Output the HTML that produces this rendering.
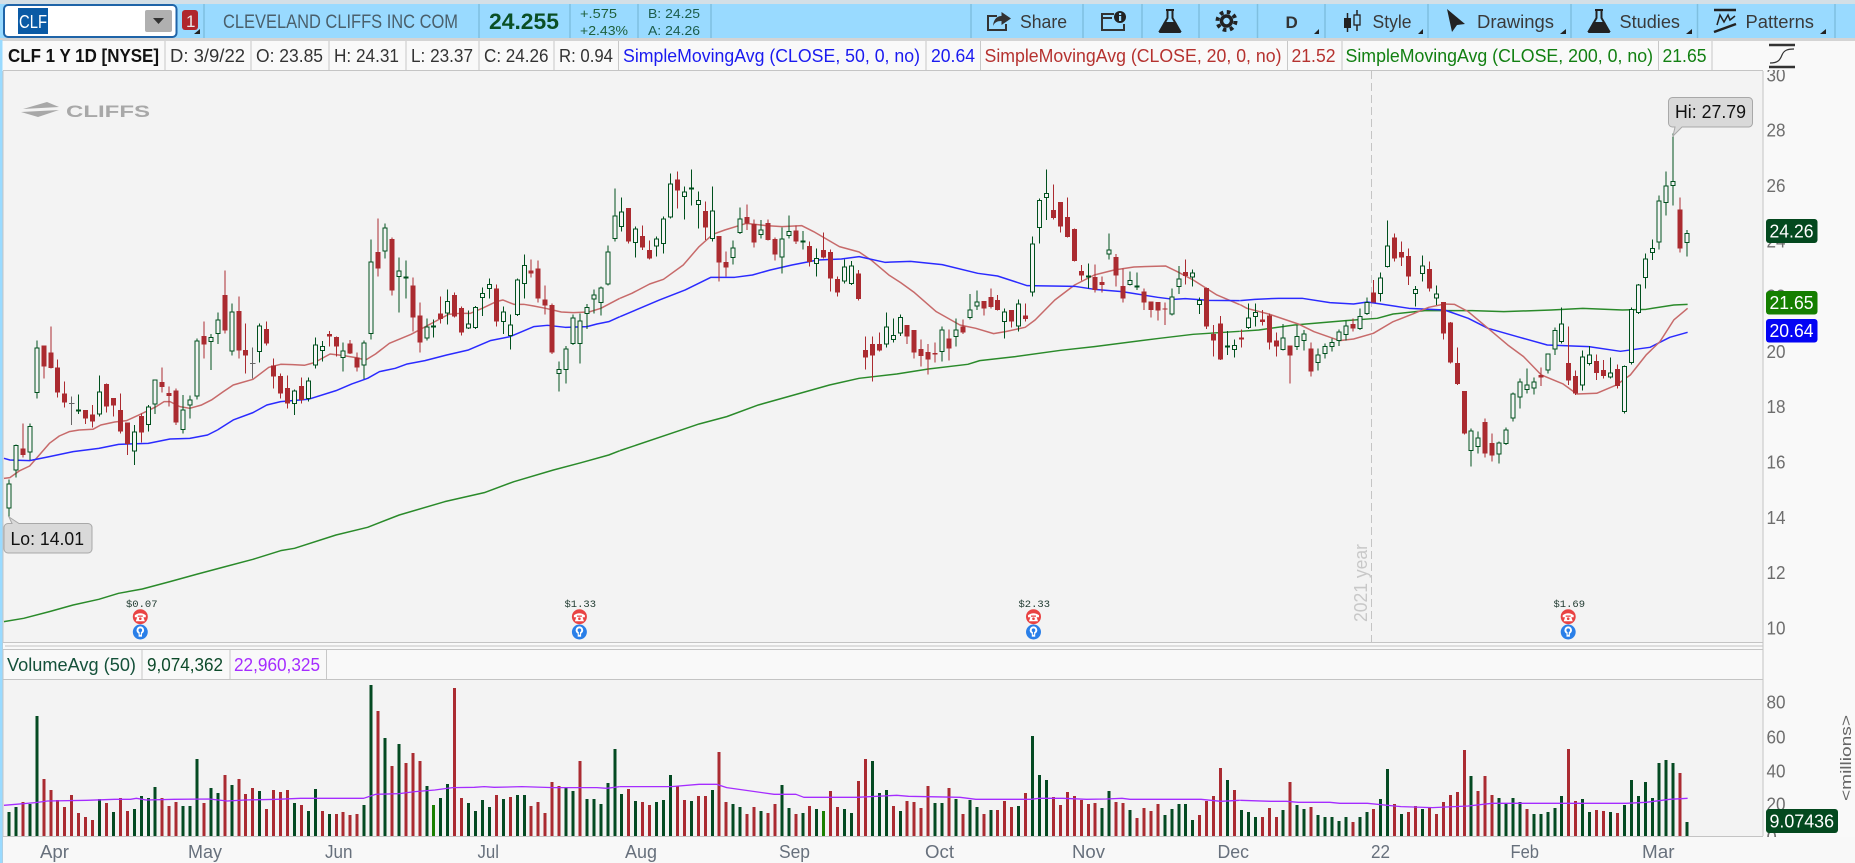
<!DOCTYPE html>
<html><head><meta charset="utf-8"><title>CLF chart</title>
<style>
html,body{margin:0;padding:0;width:1855px;height:863px;overflow:hidden;background:#f9f9f9}
svg{display:block;position:absolute;left:0;top:0}
text{font-family:"Liberation Sans",sans-serif;white-space:pre}
path,polyline{vector-effect:non-scaling-stroke;fill:none}
.s{stroke:#7fbfe0;stroke-width:1.5}
.t{font-size:18px;fill:#3a3a3a}
.l{font-size:18px}
.a{font-size:18.5px;fill:#6e6e6e}
.x{font-size:18.5px;fill:#67707c}
.w{font-size:18.5px;fill:#fff}
.m{font-size:10.5px;fill:#1f3a30;font-family:"Liberation Mono",monospace}
</style></head><body>
<svg width="1855" height="863" viewBox="0 0 1855 863" xmlns="http://www.w3.org/2000/svg">
<rect width="1855" height="863" fill="#f9f9f9"/>
<rect width="1855" height="4" fill="#d3dfe6"/>
<rect y="4" width="1855" height="34" fill="#99daff"/>
<rect y="38" width="1855" height="3" fill="#d4d4d4"/>
<rect y="40" width="2.5" height="823" fill="#99daff"/>
<rect x="3" y="71" width="1760" height="571" fill="#f3f3f3"/>
<rect x="3" y="680" width="1760" height="156" fill="#f3f3f3"/>
<!-- toolbar -->
<rect x="4" y="5" width="172.500" height="32" rx="4" fill="#fff" stroke="#1f64a8" stroke-width="2"/>
<rect x="18" y="8" width="30" height="26" fill="#0a5aa5"/>
<text x="19" y="28" font-size="18" fill="#fff" textLength="28" lengthAdjust="spacingAndGlyphs">CLF</text>
<rect x="145" y="10" width="27" height="22" rx="2" fill="#b0b0b0"/>
<polygon points="153,18 164,18 158.500,24" fill="#333"/>
<rect x="182" y="10" width="16" height="20" rx="3" fill="#b0272d"/>
<text x="186" y="27" font-size="17" fill="#e8e8e8">1</text>
<polygon points="200,29 200,34 194,34" fill="#222"/>
<path class="s" d="M204 4V38M479 4V38M570 4V38M638 4V38M711 4V38M971 4V38M1083 4V38M1142 4V38M1199 4V38M1257.500 4V38M1325 4V38M1428 4V38M1571 4V38M1697.500 4V38M1835 4V38"/>
<text x="223" y="28" font-size="19" fill="#4a5f6b" textLength="235" lengthAdjust="spacingAndGlyphs">CLEVELAND CLIFFS INC COM</text>
<text x="489" y="29" font-size="22" font-weight="bold" fill="#0a4f25" textLength="70" lengthAdjust="spacingAndGlyphs">24.255</text>
<text x="580" y="18" font-size="13" fill="#1e5f3a" textLength="37" lengthAdjust="spacingAndGlyphs">+.575</text>
<text x="580" y="35" font-size="13" fill="#1e5f3a" textLength="48" lengthAdjust="spacingAndGlyphs">+2.43%</text>
<text x="648" y="18" font-size="13" fill="#1b5c4b" textLength="52" lengthAdjust="spacingAndGlyphs">B: 24.25</text>
<text x="648" y="35" font-size="13" fill="#1b5c4b" textLength="52" lengthAdjust="spacingAndGlyphs">A: 24.26</text>
<!-- share -->
<path d="M997 16H988V30H1006V24" stroke="#333" stroke-width="2"/>
<path style="fill:#333" d="M1001.500 12L1011 18.500L1001.500 25V21C997 21 994.500 22.500 993 26C993.500 20 996.500 16 1001.500 16Z"/>
<text class="t" x="1020" y="28" textLength="47" lengthAdjust="spacingAndGlyphs">Share</text>
<!-- info -->
<path d="M1114 14H1102V30H1124V24M1102 18H1112" stroke="#333" stroke-width="2"/>
<circle cx="1120" cy="17" r="6" fill="#222"/>
<rect x="1119" y="16" width="2.200" height="5" fill="#99daff"/><rect x="1119" y="13" width="2.200" height="2" fill="#99daff"/>
<!-- flask -->
<path d="M1166 10H1174M1167.500 10V18L1160 31H1180L1172.500 18V10" stroke="#222" stroke-width="2"/>
<path style="fill:#222" d="M1164 22H1176L1181 33H1159Z"/>
<!-- gear -->
<circle cx="1226.500" cy="21" r="5" fill="none" stroke="#222" stroke-width="3.500"/>
<circle cx="1226.500" cy="21" r="9" fill="none" stroke="#222" stroke-width="4" stroke-dasharray="3.600 3.470"/>
<text x="1285.500" y="28" font-size="17" font-weight="bold" fill="#333">D</text>
<polygon points="1319,29 1319,34 1314,34" fill="#222"/>
<!-- style icon -->
<path d="M1347.500 13V32" stroke="#222" stroke-width="1.500"/><rect x="1344" y="18" width="7" height="10" fill="#222"/>
<path d="M1357 10V31" stroke="#222" stroke-width="1.500"/><rect x="1354" y="15" width="6" height="10" fill="#99daff" stroke="#222" stroke-width="1.300"/>
<text class="t" x="1372.500" y="28" textLength="39" lengthAdjust="spacingAndGlyphs">Style</text>
<polygon points="1423,29 1423,34 1418,34" fill="#222"/>
<!-- cursor -->
<polygon points="1447,9 1465,24 1457,25 1452,32" fill="#222"/>
<text class="t" x="1477" y="28" textLength="77" lengthAdjust="spacingAndGlyphs">Drawings</text>
<polygon points="1566,29 1566,34 1560,34" fill="#222"/>
<path d="M1595 10H1603M1596.500 10V18L1589 31H1609L1601.500 18V10" stroke="#222" stroke-width="2"/>
<path style="fill:#222" d="M1593 22H1605L1610 33H1588Z"/>
<text class="t" x="1619.500" y="28" textLength="60.500" lengthAdjust="spacingAndGlyphs">Studies</text>
<polygon points="1692,29 1692,34 1686,34" fill="#222"/>
<!-- patterns -->
<path d="M1714 10H1736" stroke="#222" stroke-width="2.500"/>
<path d="M1714 32L1736 24" stroke="#222" stroke-width="2.500"/>
<path d="M1717 25L1720 15L1724 22L1728 15L1730 20L1735 16" stroke="#222" stroke-width="1.500"/>
<text class="t" x="1745.500" y="28" textLength="68.500" lengthAdjust="spacingAndGlyphs">Patterns</text>
<polygon points="1826,29 1826,34 1820,34" fill="#222"/>
<!-- axes labels -->
<text class="a" x="1766.500" y="81.500" textLength="19" lengthAdjust="spacingAndGlyphs">30</text>
<text class="a" x="1766.500" y="136.500" textLength="19" lengthAdjust="spacingAndGlyphs">28</text>
<text class="a" x="1766.500" y="192" textLength="19" lengthAdjust="spacingAndGlyphs">26</text>
<text class="a" x="1766.500" y="247.500" textLength="19" lengthAdjust="spacingAndGlyphs">24</text>
<text class="a" x="1766.500" y="302.500" textLength="19" lengthAdjust="spacingAndGlyphs">22</text>
<text class="a" x="1766.500" y="358" textLength="19" lengthAdjust="spacingAndGlyphs">20</text>
<text class="a" x="1766.500" y="413" textLength="19" lengthAdjust="spacingAndGlyphs">18</text>
<text class="a" x="1766.500" y="468.500" textLength="19" lengthAdjust="spacingAndGlyphs">16</text>
<text class="a" x="1766.500" y="524" textLength="19" lengthAdjust="spacingAndGlyphs">14</text>
<text class="a" x="1766.500" y="579" textLength="19" lengthAdjust="spacingAndGlyphs">12</text>
<text class="a" x="1766.500" y="634.500" textLength="19" lengthAdjust="spacingAndGlyphs">10</text>
<text class="a" x="1766.500" y="708.500" textLength="19" lengthAdjust="spacingAndGlyphs">80</text>
<text class="a" x="1766.500" y="743.500" textLength="19" lengthAdjust="spacingAndGlyphs">60</text>
<text class="a" x="1766.500" y="777.500" textLength="19" lengthAdjust="spacingAndGlyphs">40</text>
<text class="a" x="1766.500" y="810.500" textLength="19" lengthAdjust="spacingAndGlyphs">20</text>
<text class="a" x="1766.500" y="844">0</text>
<!-- legend row -->
<rect x="3" y="41" width="1852" height="29" fill="#f9f9f9"/>
<path d="M3 70.500H1763M3 71V863" stroke="#c4c4c4" stroke-width="1"/>
<path d="M165 41V70M251 41V70M329 41V70M406 41V70M479 41V70M554 41V70M618.500 41V70M926 41V70M980.500 41V70M1287.500 41V70M1342 41V70M1658.500 41V70M1712 41V70" stroke="#c8c8c8" stroke-width="1"/>
<text class="l" x="8" y="62" font-weight="bold" fill="#111" textLength="151" lengthAdjust="spacingAndGlyphs">CLF 1 Y 1D [NYSE]</text>
<text class="l" x="170" y="62" fill="#333" textLength="75" lengthAdjust="spacingAndGlyphs">D: 3/9/22</text>
<text class="l" x="256" y="62" fill="#333" textLength="67" lengthAdjust="spacingAndGlyphs">O: 23.85</text>
<text class="l" x="334" y="62" fill="#333" textLength="65" lengthAdjust="spacingAndGlyphs">H: 24.31</text>
<text class="l" x="411" y="62" fill="#333" textLength="62" lengthAdjust="spacingAndGlyphs">L: 23.37</text>
<text class="l" x="484" y="62" fill="#333" textLength="64.500" lengthAdjust="spacingAndGlyphs">C: 24.26</text>
<text class="l" x="559" y="62" fill="#333" textLength="54" lengthAdjust="spacingAndGlyphs">R: 0.94</text>
<text class="l" x="623" y="62" fill="#1a1af0" textLength="297" lengthAdjust="spacingAndGlyphs">SimpleMovingAvg (CLOSE, 50, 0, no)</text>
<text class="l" x="931" y="62" fill="#1a1af0" textLength="44" lengthAdjust="spacingAndGlyphs">20.64</text>
<text class="l" x="984.500" y="62" fill="#b5322f" textLength="297" lengthAdjust="spacingAndGlyphs">SimpleMovingAvg (CLOSE, 20, 0, no)</text>
<text class="l" x="1291.500" y="62" fill="#b5322f" textLength="44" lengthAdjust="spacingAndGlyphs">21.52</text>
<text class="l" x="1345.500" y="62" fill="#128012" textLength="307.500" lengthAdjust="spacingAndGlyphs">SimpleMovingAvg (CLOSE, 200, 0, no)</text>
<text class="l" x="1662.500" y="62" fill="#128012" textLength="44" lengthAdjust="spacingAndGlyphs">21.65</text>
<!-- S icon -->
<path d="M1769 45H1795M1769 67H1795" stroke="#333" stroke-width="2.500"/>
<path d="M1770 63C1778 63 1780 60 1782 55C1784 50 1788 49 1794 49" stroke="#333" stroke-width="1.200"/>
<!-- logo -->
<polygon points="23,109 47,102 59,107 41,108" fill="#a8a8a8"/>
<polygon points="21,112 59,110 38,117" fill="#a8a8a8"/>
<text x="66" y="117" font-size="16.500" font-weight="bold" fill="#a8a8a8" textLength="84" lengthAdjust="spacingAndGlyphs">CLIFFS</text>
<!-- year line -->
<path d="M1371.500 71V642" stroke="#c4c4c4" stroke-width="1" stroke-dasharray="8 4"/>
<text transform="translate(1367,622) rotate(-90)" font-size="18" fill="#c8c8c8" textLength="78" lengthAdjust="spacingAndGlyphs">2021 year</text>
<!-- MAs -->
<g stroke-linejoin="round">
<g transform="translate(0,430) scale(.3953,.3333)" stroke-width="1.500">
<polyline stroke="#c76a6a" points="10,145 25,143 50,122 75,108 92,85 125,40 150,18 175,5 200,0"/>
<polyline stroke="#2a2aff" points="10,85 25,90 75,92 125,80 185,65 250,55 300,43 375,40 430,27 480,25 525,15 550,0"/>
<polyline stroke="#2a8a2a" points="10,575 60,565 125,545 185,525 250,508 300,490 360,477 430,455 500,432 570,410 640,388 710,362 745,355 850,315 930,292 1010,255 1125,215 1225,188 1300,155 1400,120 1470,98 1540,75 1568,62"/>
</g>
<g transform="translate(0,130) scale(.3953,.3333)" stroke-width="1.500">
<polyline stroke="#c76a6a" points="200,900 235,898 255,885 290,876 320,872 355,853 395,830 415,815 430,815 455,830 480,835 510,825 535,810 565,785 590,765 640,748 680,712 710,703 740,704 770,706 795,698 835,672 870,677 900,683 925,690 950,672 985,640 1040,613 1100,575 1135,553 1165,550 1190,550 1220,535 1255,515 1272,510 1300,523 1325,523 1350,528 1380,535 1420,546 1450,548 1490,546 1520,535 1568,505"/>
<polyline stroke="#2a2aff" points="550,900 590,870 640,848 675,825 710,815 780,808 850,782 890,762 930,745 960,725 1000,715 1030,702 1075,692 1130,675 1185,660 1240,632 1290,620 1320,605 1350,590 1385,586 1430,592 1485,590 1510,582 1540,575 1568,560"/>
</g>
<g transform="translate(620,130) scale(.3953,.3333)" stroke-width="1.500">
<polyline stroke="#c76a6a" points="0,505 30,490 75,462 110,448 160,405 200,350 235,313 265,300 320,280 370,287 410,290 460,287 490,305 555,350 605,366 635,390 680,435 710,458 745,488 800,545 860,585 900,595 945,611 975,605 1025,592 1050,570 1100,510 1150,465 1200,435 1250,420 1300,411 1345,409 1380,408 1410,425 1450,450 1510,495 1568,524"/>
<polyline stroke="#2a2aff" points="0,560 50,535 100,510 165,480 230,442 290,442 335,435 380,420 435,405 500,390 560,387 605,380 670,397 735,394 815,404 905,430 955,438 1030,467 1150,469 1200,478 1270,485 1360,502 1400,508 1430,506 1490,511 1568,512"/>
<polyline stroke="#2a8a2a" points="0,962 160,898 200,882 270,860 350,825 440,795 530,765 605,745 700,732 780,717 880,703 910,692 1000,680 1115,661 1200,650 1365,625 1450,613 1568,604"/>
</g>
<g transform="translate(1235,130) scale(.3953,.3333)" stroke-width="1.500">
<polyline stroke="#2a8a2a" points="13,604 60,600 150,585 280,572 360,565 400,552 480,542 600,542 680,545 800,540 880,535 980,540 1040,538 1110,525 1145,523"/>
<polyline stroke="#2a2aff" points="13,512 50,508 110,505 170,505 240,518 300,522 335,516 440,535 530,540 590,565 640,595 720,622 790,645 895,650 975,664 1050,652 1100,622 1145,607"/>
<polyline stroke="#c76a6a" points="13,524 30,535 85,552 160,582 200,605 265,632 300,627 350,610 400,575 450,552 490,532 530,522 555,523 590,545 630,585 690,645 730,680 775,735 830,762 865,792 915,790 965,765 1000,735 1040,675 1075,635 1110,570 1145,535"/>
</g>
</g>
<!-- candles -->
<defs>
<path id="gb" d="M0 1068V1128M1 953V1014M3 896V960M4 660V782M13 792V846M18 912V957M20 837V877M21 756V816M25 846V892M26 816V819M27 639V792M29 628v.1M30 576V605M32 552V657M36 594V659M41 789V815M43 759V800M44 651V699M45 655v.1M48 669V677M51 645V699M52 402V605M54 300V357M56 429V434M60 597V618M63 520V543M66 588v.1M67 538V587M68 496v.1M69 469v.1M71 552V569M72 591V610M73 456V548M74 412V455M79 724v.1M80 663V713M81 570V635M82 579V635M83 538V545M84 501v.1M85 480V512M86 372V456M87 264V320M88 252V284M90 303V332M93 333V342M94 273V335M95 168V255M97 192V194M99 218v.1M101 249V320M104 360V377M105 273V302M108 306V308M111 333V375M112 310v.1M116 391V395M120 417V447M121 414V455M126 597V636M127 622v.1M128 569V603M134 606V659M136 606V614M138 546V557M139 522v.1M143 552V569M145 528V582M147 348V480M148 218V287M149 196v.1M158 366v.1M161 457v.1M167 507V546M168 453V464M170 435v.1M171 517V518M176 652v.1M178 570V587M179 553v.1M183 630V652M185 625V644M186 618V625M188 681V691M189 655V665M190 644v.1M191 612V625M192 594V608M194 565V590M195 523V545M197 450V485M198 354V404M202 485v.1M203 414V425M205 498v.1M210 909V956M211 930V944M214 945V966M215 906V935M216 798V858M217 762V795M218 771V773M219 762V768M221 678V714M222 608V651M223 588V628M226 687V759M227 681V695M230 735v.1M232 716V838M233 544V692M234 471V542M235 393V437M236 361v.1M237 219V330M238 174V212M239 160v.1M241 316V332"/>
</defs>
<g transform="translate(9,130) scale(6.963,.33333)" shape-rendering="crispEdges">
<path stroke="#666" stroke-width="1" d="M9 800V885M8.600 820H9.400M35 653V745M34.600 700H35.400"/>
<path stroke="#ab2b30" stroke-width="1" d="M2 880V982M5 646V745M6 590V716M7 688V802M8 755V832M11 840V882M12 825V892M14 760V848M15 804V860M16 790V910M17 877V975M19 850V938M22 712V788M23 770V830M24 775V885M28 575V685M31 421V610M33 500V685M34 580V730M37 575V646M38 686V775M39 731V805M40 737V835M42 743V820M46 603V650M47 620V680M49 630V672M50 667V725M53 265V440M55 322V497M58 443V605M59 518V668M62 500V580M64 487V562M65 530V617M70 463V590M75 388V442M76 392V518M77 466V553M78 520V672M89 234V340M91 286V360M92 332V388M96 125V235M100 215V330M102 318V455M103 365V440M106 223V300M107 268V352M109 268V332M110 322V392M113 287V342M115 334V410M117 307V385M118 358V485M119 440V500M122 420V512M123 620V718M124 620V755M125 607V664M129 585V642M130 600V685M131 628V710M132 642V733M133 637V697M135 598V692M137 568V612M140 513V556M141 476V535M142 495V542M144 540V592M146 520V575M150 163V268M151 216V308M152 202V322M153 295V395M154 405V452M156 403V487M157 440V488M159 372V470M160 415V518M163 475V540M164 514V562M165 516V572M166 518V585M169 388V464M172 472V597M173 585V680M174 558V690M177 598V652M180 540V587M181 550V658M182 608V680M184 646V760M187 638V740M193 566V604M196 450V517M199 310V395M200 335V408M201 355V465M204 394V485M206 516V628M207 576V700M208 652V765M209 783V913M212 866V983M213 910V995M220 712V768M224 590V765M225 722V795M228 673V750M229 690V745M231 703V775M240 203V368"/>
<path stroke="#ab2b30" stroke-width="5" d="M2 955V975M5 646V710M6 667V714M7 712V788M8 790V818M11 840V866M12 853V875M14 762V830M15 804V827M16 840V905M17 877V942M19 858V908M22 756V771M23 789V798M24 781V878M28 618V644M31 495V602M33 543V662M34 660V677M37 597V641M38 706V740M39 738V791M40 774V821M42 768V810M46 612V620M47 621V650M49 640V671M50 682V713M53 366V416M55 327V482M58 466V563M59 556V638M62 550V567M64 495V560M65 534V608M70 475V575M75 421V431M76 415V506M77 508V527M78 525V668M89 234V335M91 318V353M92 360V386M96 148V182M100 243V293M102 318V398M103 396V413M106 261V280M107 282V338M109 279V330M110 327V374M113 301V335M115 348V396M117 360V383M118 366V446M119 447V488M122 430V507M123 660V683M124 642V677M125 642V662M129 585V620M130 600V668M131 657V678M132 666V689M133 669V674M135 625V656M137 590V608M140 513V536M141 501V531M142 510V540M144 540V575M146 556V567M150 240V264M151 216V290M152 261V321M153 297V393M154 423V437M156 441V480M157 456V465M159 381V437M160 468V506M163 484V518M164 514V540M165 516V542M166 535V539M169 426V438M172 474V590M173 612V632M174 580V689M177 622V629M180 568V576M181 557V638M182 631V650M184 646V677M187 655V725M193 582V596M196 487V517M199 322V386M200 366V383M201 378V440M204 417V476M206 516V611M207 578V698M208 699V762M209 783V911M212 876V971M213 939V977M220 735V743M224 699V752M225 738V790M228 693V729M229 720V738M231 717V768M240 238V356"/>
<path stroke="#00501e" stroke-width="1" d="M0 1048V1160M1 943V1042M3 880V990M4 632V805M10 793V852M13 737V860M18 885V1005M20 825V905M21 748V852M25 795V910M26 797V865M27 626V808M29 612V720M30 548V642M32 521V676M36 580V697M41 778V855M43 742V815M44 622V715M45 633V695M48 638V725M51 632V747M52 328V628M54 281V385M56 382V548M57 392V505M60 565V632M61 568V622M63 478V583M66 542V597M67 528V597M68 473V558M69 446V505M71 530V612M72 553V658M73 445V558M74 373V505M79 695V785M80 648V760M81 553V645M82 550V700M83 522V597M84 478V550M85 470V556M86 347V466M87 176V334M88 202V305M90 290V382M93 320V380M94 259V370M95 130V265M97 170V268M98 118V226M99 185V295M101 170V335M104 332V404M105 232V312M108 270V325M111 292V430M112 256V325M114 303V358M116 356V440M120 388V460M121 393V465M126 548V652M127 566V638M128 553V618M134 590V695M136 565V650M138 492V568M139 481V540M143 535V625M145 508V605M147 320V500M148 205V340M149 118V270M155 400V475M158 310V388M161 425V467M162 428V480M167 476V556M168 408V492M170 418V470M171 502V552M175 603V675M176 628V683M178 520V597M179 520V590M183 582V662M185 585V660M186 600V662M188 655V722M189 640V685M190 625V665M191 598V648M192 572V632M194 535V600M195 502V555M197 428V515M198 271V413M202 468V530M203 376V455M205 466V525M210 895V1010M211 905V970M214 935V1000M215 892V945M216 788V875M217 745V835M218 716V790M219 743V794M221 670V730M222 593V675M223 533V640M226 662V782M227 648V706M230 682V745M232 706V850M233 533V703M234 462V552M235 370V476M236 328V390M237 196V358M238 125V256M239 10V226M241 300V380"/>
<path stroke="#00501e" stroke-width="5" d="M10 839V845M57 439V445M61 587V593M98 173V179M114 331V337M155 437V443M162 467V473M175 647V653"/>
<use href="#gb" stroke="#00501e" stroke-width="5" stroke-linecap="square"/>
<use href="#gb" stroke="#f5f5f5" stroke-width="3" stroke-linecap="square"/>
</g>
<!-- earnings -->
<text class="m" x="126" y="607">$0.07</text>
<text class="m" x="564.500" y="607">$1.33</text>
<text class="m" x="1018.500" y="607">$2.33</text>
<text class="m" x="1553.500" y="607">$1.69</text>
<defs>
<g id="ev">
<circle cx="0" cy="0" r="7.500" fill="#e94343"/>
<path style="fill:#fff" d="M-5.500 -1.500Q0 -5.500 5.500 -1.500V.5H2.500V-1.200H-2.500V.5H-5.500Z"/>
<path style="fill:#fff" d="M-3 0H3L4.500 4.500H-4.500Z"/>
<circle cx="0" cy="2" r="1.300" fill="#e94343"/>
<circle cx="0" cy="15.300" r="7.500" fill="#2a7fe8"/>
<circle cx="0" cy="13.500" r="3.800" fill="#fff"/>
<rect x="-1.700" y="16" width="3.400" height="4" fill="#fff"/>
<circle cx="0" cy="13.500" r="1.800" fill="#2a7fe8"/>
<rect x="-.6" y="14" width="1.200" height="4" fill="#2a7fe8"/>
</g>
</defs>
<use href="#ev" x="140.300" y="616.700"/>
<use href="#ev" x="579.400" y="616.700"/>
<use href="#ev" x="1033.500" y="616.700"/>
<use href="#ev" x="1568.200" y="616.700"/>
<!-- Hi / Lo -->
<path style="fill:#d9d9d9" stroke="#a8a8a8" d="M1672.500 97.500H1749A4 4 0 0 1 1752.500 101.500V123A4 4 0 0 1 1749 127H1682L1673 136L1675 127H1672.500A4 4 0 0 1 1668.500 123V101.500A4 4 0 0 1 1672.500 97.500Z"/>
<text x="1675" y="118" font-size="18" fill="#111" textLength="71" lengthAdjust="spacingAndGlyphs">Hi: 27.79</text>
<path style="fill:#d9d9d9" stroke="#a8a8a8" d="M8 523.500H12L9 517L19 523.500H88A4 4 0 0 1 92 527.500V549A4 4 0 0 1 88 553H8A4 4 0 0 1 4 549V527.500A4 4 0 0 1 8 523.500Z"/>
<text x="10.500" y="545" font-size="18" fill="#111" textLength="73.500" lengthAdjust="spacingAndGlyphs">Lo: 14.01</text>
<!-- separators -->
<rect x="3" y="642" width="1760" height="8" fill="#f9f9f9"/>
<path d="M3 642.500H1763M5 646H1763M3 649.500H1763M3 679.500H1763M1763 71V836M3 836.500H1763" stroke="#c4c4c4" stroke-width="1"/>
<path d="M142 650V679M230 650V679M326.500 650V679" stroke="#c8c8c8" stroke-width="1"/>
<text class="l" x="7" y="671" fill="#14513a" textLength="129" lengthAdjust="spacingAndGlyphs">VolumeAvg (50)</text>
<text class="l" x="147" y="671" fill="#0d4a2a" textLength="76" lengthAdjust="spacingAndGlyphs">9,074,362</text>
<text class="l" x="234" y="671" fill="#a52cff" textLength="86" lengthAdjust="spacingAndGlyphs">22,960,325</text>
<!-- volume -->
<g transform="translate(9,680) scale(6.963,.33333)" shape-rendering="crispEdges" stroke-width="3">
<path stroke="#044a22" d="M0 396V468M1 381V468M3 372V468M4 108V468M13 357V468M15 396V468M18 387V468M19 348V468M20 354V468M21 321V468M25 378V468M26 378V468M27 237V468M29 324V468M30 339V468M32 315V468M36 333V468M41 369V468M43 393V468M44 327V468M46 402V468M51 375V468M52 15V468M54 174V468M56 192V468M60 318V468M62 354V468M63 312V468M66 369V468M67 393V468M68 360V468M69 381V468M71 357V468M73 345V468M74 345V468M80 324V468M81 333V468M83 357V468M84 357V468M85 372V468M86 309V468M87 207V468M88 342V468M90 363V468M93 366V468M94 360V468M95 285V468M98 363V468M101 330V468M104 372V468M105 381V468M108 393V468M111 315V468M112 384V468M114 399V468M116 387V468M120 387V468M121 399V468M124 243V468M125 339V468M126 330V468M128 393V468M133 369V468M134 369V468M136 357V468M138 360V468M139 381V468M141 390V468M145 378V468M147 168V468M148 285V468M149 300V468M157 384V468M158 333V468M161 390V468M166 405V468M167 387V468M168 372V468M169 372V468M170 420V468M175 300V468M177 390V468M178 396V468M179 411V468M183 390V468M185 375V468M186 387V468M188 405V468M189 411V468M190 411V468M191 423V468M192 411V468M194 411V468M195 396V468M197 357V468M198 267V468M200 402V468M203 387V468M210 288V468M214 354V468M215 369V468M216 354V468M217 366V468M219 402V468M220 402V468M221 396V468M222 384V468M223 348V468M226 357V468M227 396V468M230 396V468M232 375V468M233 300V468M234 348V468M235 306V468M236 354V468M237 249V468M238 240V468M239 249V468M241 426V468"/>
<path stroke="#aa2b31" d="M2 366V468M5 297V468M6 330V468M7 360V468M8 381V468M9 345V468M10 399V468M11 411V468M12 420V468M14 369V468M16 354V468M17 393V468M22 354V468M23 378V468M24 366V468M28 369V468M31 285V468M33 297V468M34 342V468M35 324V468M37 387V468M38 330V468M39 336V468M40 330V468M42 375V468M45 393V468M47 402V468M48 396V468M49 405V468M50 402V468M53 93V468M55 258V468M57 249V468M58 219V468M59 243V468M64 24V468M65 354V468M70 345V468M72 351V468M75 378V468M76 366V468M77 399V468M78 306V468M79 318V468M82 243V468M89 327V468M91 366V468M92 375V468M96 318V468M97 360V468M99 348V468M100 348V468M102 216V468M103 366V468M106 402V468M107 381V468M109 399V468M110 372V468M113 402V468M115 378V468M118 333V468M119 381V468M122 303V468M123 237V468M127 378V468M129 363V468M130 366V468M131 384V468M132 318V468M135 324V468M137 402V468M140 402V468M142 390V468M143 363V468M144 381V468M146 339V468M150 351V468M151 375V468M152 336V468M153 348V468M154 360V468M155 372V468M156 369V468M159 366V468M160 369V468M162 414V468M163 384V468M164 393V468M165 372V468M171 405V468M172 363V468M173 348V468M174 264V468M176 330V468M180 411V468M181 384V468M182 411V468M184 306V468M187 381V468M193 426V468M196 387V468M199 372V468M201 396V468M202 378V468M204 384V468M205 402V468M206 366V468M207 345V468M208 336V468M209 210V468M211 333V468M212 288V468M213 345V468M218 387V468M224 207V468M225 363V468M228 390V468M229 393V468M231 399V468M240 279V468"/>
<path stroke="#1a8000" d="M61 375V468M117 393V468"/>
</g>
<g stroke="#a52cff" stroke-width="1.300" stroke-linejoin="round">
<polyline transform="translate(0,680) scale(.3953,.3333)" points="10,376 40,373 90,368 120,363 220,361 290,358 330,358 345,355 370,360 440,358 530,357 575,363 620,360 700,358 760,355 920,355 950,343 1010,341 1050,335 1100,330 1145,323 1200,322 1225,320 1250,322 1320,320 1400,323 1510,323 1535,325 1568,320"/>
<polyline transform="translate(620,680) scale(.3953,.3333)" points="0,320 130,320 200,313 245,313 270,323 390,343 445,343 465,352 600,352 700,346 730,349 860,352 900,358 1000,358 1040,358 1060,355 1120,355 1180,358 1230,357 1270,355 1290,358 1470,358 1520,364 1568,361"/>
<polyline transform="translate(1235,600) scale(.3953,.3333)" points="13,601 90,604 130,604 160,607 240,607 265,610 335,610 420,620 500,623 590,618 650,610 990,610 1040,607 1100,598 1145,595"/>
</g>
<!-- time axis -->
<rect x="3" y="837" width="1852" height="26" fill="#f8f8f8"/>
<text class="x" x="40" y="858" textLength="29" lengthAdjust="spacingAndGlyphs">Apr</text>
<text class="x" x="188" y="858" textLength="34" lengthAdjust="spacingAndGlyphs">May</text>
<text class="x" x="325" y="858" textLength="27.500" lengthAdjust="spacingAndGlyphs">Jun</text>
<text class="x" x="477.500" y="858" textLength="21.500" lengthAdjust="spacingAndGlyphs">Jul</text>
<text class="x" x="625" y="858" textLength="32" lengthAdjust="spacingAndGlyphs">Aug</text>
<text class="x" x="779" y="858" textLength="31" lengthAdjust="spacingAndGlyphs">Sep</text>
<text class="x" x="925" y="858" textLength="29" lengthAdjust="spacingAndGlyphs">Oct</text>
<text class="x" x="1072" y="858" textLength="33" lengthAdjust="spacingAndGlyphs">Nov</text>
<text class="x" x="1217.500" y="858" textLength="31.500" lengthAdjust="spacingAndGlyphs">Dec</text>
<text class="x" x="1371" y="858" textLength="19" lengthAdjust="spacingAndGlyphs">22</text>
<text class="x" x="1510.500" y="858" textLength="28.500" lengthAdjust="spacingAndGlyphs">Feb</text>
<text class="x" x="1642" y="858" textLength="32.500" lengthAdjust="spacingAndGlyphs">Mar</text>
<!-- tags -->
<rect x="1766" y="219" width="51.500" height="24" rx="3" fill="#04491f"/>
<text class="w" x="1769.500" y="237.500" textLength="44" lengthAdjust="spacingAndGlyphs">24.26</text>
<rect x="1766" y="291" width="51.500" height="23.500" rx="3" fill="#157f00"/>
<text class="w" x="1769.500" y="309" textLength="44" lengthAdjust="spacingAndGlyphs">21.65</text>
<rect x="1766" y="319" width="51.500" height="23.500" rx="3" fill="#0404f4"/>
<text class="w" x="1769.500" y="337" textLength="44" lengthAdjust="spacingAndGlyphs">20.64</text>
<rect x="1766" y="809" width="72" height="24" rx="3" fill="#04491f"/>
<text class="w" x="1769.500" y="827.500" textLength="64.500" lengthAdjust="spacingAndGlyphs">9.07436</text>
<text transform="translate(1851,801) rotate(-90)" font-size="15" fill="#666" textLength="86" lengthAdjust="spacingAndGlyphs">&lt;millions&gt;</text>
</svg>
</body></html>
